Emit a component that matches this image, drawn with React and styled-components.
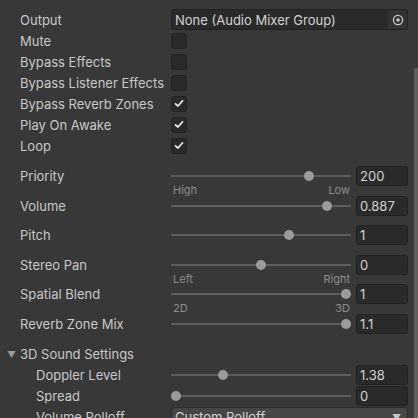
import styled, { createGlobalStyle } from "styled-components";

const Global = createGlobalStyle`
  body {
    margin: 0;
    background: #383838;
    font-family: Inter, "Noto Sans", sans-serif;
  }
`;

const Panel = styled.div`
  position: relative;
  height: 418px;
  overflow: hidden;
  padding: 9px 10px 0 0;
  box-sizing: border-box;
  background: #383838;
  color: #c8c8c8;
  font-size: 13px;
`;

const Row = styled.div`
  display: grid;
  grid-template-columns: 171px 1fr;
  align-items: center;
  height: 21px;
`;

const SliderRow = styled.div`
  display: grid;
  grid-template-columns: 171px 1fr;
  align-items: start;
  height: 29.5px;
  margin-top: ${(p) => (p.$first ? "10px" : "0")};
`;

const Label = styled.div`
  padding-left: ${(p) => 20 + (p.$indent ? 16 : 0)}px;
  line-height: 20px;
  white-space: nowrap;
`;

const ObjectField = styled.div`
  display: flex;
  align-items: center;
  height: 19px;
  background: #2a2a2a;
  border: 1px solid #222;
  border-radius: 3px;
  overflow: hidden;
`;

const ObjectText = styled.span`
  flex: 1;
  padding-left: 3px;
  color: #d2d2d2;
`;

const Picker = styled.span`
  display: flex;
  align-items: center;
  justify-content: center;
  width: 19px;
  height: 100%;
  background: #333;
`;

const Check = styled.div`
  display: flex;
  align-items: center;
  justify-content: center;
  width: 14px;
  height: 14px;
  background: #2a2a2a;
  border: 1px solid #232323;
  border-radius: 3px;
`;

const Slider = styled.div`
  display: flex;
  flex-direction: column;
`;

const SliderLine = styled.div`
  display: flex;
  align-items: center;
  gap: 5px;
  height: 20px;
`;

const Track = styled.div`
  position: relative;
  width: 180px;
  height: 20px;
  &::before {
    content: "";
    position: absolute;
    left: 0;
    right: 0;
    top: 9px;
    height: 2px;
    background: #5e5e5e;
    border-radius: 1px;
  }
`;

const Knob = styled.div`
  position: absolute;
  top: 5px;
  width: 10px;
  height: 10px;
  margin-left: -5px;
  border-radius: 50%;
  background: #9b9b9b;
`;

const NumField = styled.div`
  width: 47px;
  height: 18px;
  line-height: 18px;
  padding-left: 3px;
  box-sizing: content-box;
  background: #2a2a2a;
  border: 1px solid #222;
  border-radius: 3px;
  color: #d2d2d2;
`;

const SubLabels = styled.div`
  display: flex;
  justify-content: space-between;
  width: 177px;
  padding-left: 2px;
  margin-top: -3px;
  font-size: 11px;
  line-height: 14px;
  color: #8c8c8c;
`;

const Header = styled.div`
  display: flex;
  align-items: center;
  height: 21px;
  margin-top: 0.5px;
`;

const Arrow = styled.span`
  width: 12px;
  margin-left: 7px;
  margin-right: 1px;
  font-size: 9px;
  color: #9a9a9a;
`;

const Dropdown = styled.div`
  display: flex;
  align-items: center;
  justify-content: space-between;
  height: 19px;
  padding: 0 6px 0 3px;
  background: #464646;
  border: 1px solid #2c2c2c;
  border-radius: 3px;
  color: #d2d2d2;
`;

const Caret = styled.span`
  font-size: 9px;
  color: #c4c4c4;
`;

const Scrollbar = styled.div`
  position: absolute;
  right: 0;
  top: 68px;
  bottom: 0;
  width: 4px;
  background: #5f5f5f;
  border-radius: 2px 0 0 0;
`;

const CheckMark = () => (
  <svg width="10" height="9" viewBox="0 0 10 9">
    <path d="M1.5 4.8 L4 7 L8.6 1.8" fill="none" stroke="#eee" strokeWidth="1.7" strokeLinecap="round" strokeLinejoin="round" />
  </svg>
);

const toggles = [
  ["Mute", false],
  ["Bypass Effects", false],
  ["Bypass Listener Effects", false],
  ["Bypass Reverb Zones", true],
  ["Play On Awake", true],
  ["Loop", true],
];

const sliders = [
  { name: "Priority", value: "200", t: 200 / 256, sub: ["High", "Low"] },
  { name: "Volume", value: "0.887", t: 0.887 },
  { name: "Pitch", value: "1", t: 4 / 6 },
  { name: "Stereo Pan", value: "0", t: 0.5, sub: ["Left", "Right"] },
  { name: "Spatial Blend", value: "1", t: 1, sub: ["2D", "3D"] },
  { name: "Reverb Zone Mix", value: "1.1", t: 1 },
];

function SliderControl({ value, t }) {
  return (
    <SliderLine>
      <Track>
        <Knob style={{ left: 5 + t * 170 }} />
      </Track>
      <NumField>{value}</NumField>
    </SliderLine>
  );
}

export default function App() {
  return (
    <>
      <Global />
      <Panel>
        <Row>
          <Label>Output</Label>
          <ObjectField>
            <ObjectText>None (Audio Mixer Group)</ObjectText>
            <Picker>
              <svg width="12" height="12" viewBox="0 0 12 12">
                <circle cx="6" cy="6" r="4.6" fill="none" stroke="#c8c8c8" strokeWidth="1.3" />
                <circle cx="6" cy="6" r="1.8" fill="#c8c8c8" />
              </svg>
            </Picker>
          </ObjectField>
        </Row>
        {toggles.map(([name, on]) => (
          <Row key={name}>
            <Label>{name}</Label>
            <Check>{on && <CheckMark />}</Check>
          </Row>
        ))}
        {sliders.map((s, i) => (
          <SliderRow key={s.name} $first={i === 0}>
            <Label>{s.name}</Label>
            <Slider>
              <SliderControl value={s.value} t={s.t} />
              {s.sub && (
                <SubLabels>
                  <span>{s.sub[0]}</span>
                  <span>{s.sub[1]}</span>
                </SubLabels>
              )}
            </Slider>
          </SliderRow>
        ))}
        <Header>
          <Arrow>▼</Arrow>
          <span>3D Sound Settings</span>
        </Header>
        <Row>
          <Label $indent>Doppler Level</Label>
          <SliderControl value="1.38" t={1.38 / 5} />
        </Row>
        <Row>
          <Label $indent>Spread</Label>
          <SliderControl value="0" t={0} />
        </Row>
        <Row>
          <Label $indent>Volume Rolloff</Label>
          <Dropdown>
            <span>Custom Rolloff</span>
            <Caret>▼</Caret>
          </Dropdown>
        </Row>
        <Scrollbar />
      </Panel>
    </>
  );
}
